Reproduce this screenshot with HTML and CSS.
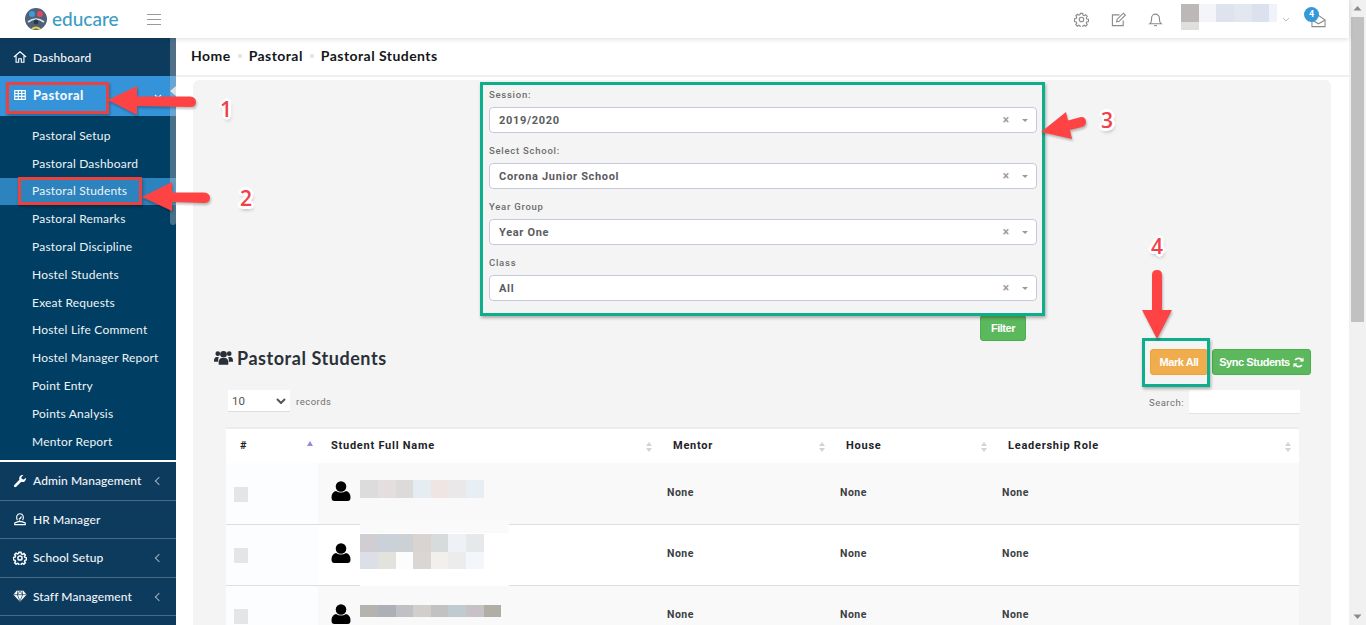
FILE: index.html
```html
<!DOCTYPE html>
<html lang="en">
<head>
<meta charset="utf-8">
<title>Pastoral Students</title>
<link rel="stylesheet" href="styles.css">
</head>
<body>
<div class="page">
  <div class="app">
    <header class="topbar">
      <div class="brand">
        <svg class="logo" viewBox="0 0 22 22"><circle cx="11" cy="11" r="11" fill="#4d6278"/><circle cx="7" cy="6" r="3" fill="#3f9ad6"/><circle cx="15" cy="6" r="3" fill="#e2475f"/><path d="M3 14q8-6 16 0" stroke="#dfe7ee" stroke-width="1.6" fill="none"/><path d="M7 21q4-3 8 0" stroke="#f3d33c" stroke-width="2" fill="none"/><circle cx="11" cy="14" r="2.4" fill="#26384a"/></svg>
        <span class="brand-name">educare</span>
      </div>
      <div class="hamburger"><i></i><i></i><i></i></div>
      <div class="top-actions">
        <svg class="top-icon" viewBox="0 0 16 16"><circle cx="8" cy="8" r="2.4"/><path d="M6.8 1.5h2.4l.4 1.8 1.3.6 1.6-1 1.6 1.7-1 1.5.5 1.3 1.9.4v2.4l-1.9.4-.5 1.3 1 1.5-1.6 1.7-1.6-1-1.3.6-.4 1.8H6.8l-.4-1.8-1.3-.6-1.6 1-1.6-1.7 1-1.5-.5-1.3-1.9-.4V7.3l1.9-.4.5-1.3-1-1.5 1.6-1.7 1.6 1 1.3-.6z"/></svg>
        <svg class="top-icon" viewBox="0 0 16 16"><path d="M13 9v5.5H1.5V3H9"/><path d="M6 10.500l.6-2.800 6.600-6.400 2 2-6.500 6.600z"/></svg>
        <svg class="top-icon" viewBox="0 0 16 16"><path d="M2 12.500q1.800-1.500 1.800-4.500V6.500a4.200 4.200 0 0 1 8.400 0V8q0 3 1.800 4.500z"/><path d="M6.500 14.500h3"/></svg>
        <div class="user-blur"><span class="user-row"></span><span class="user-under"></span></div>
        <svg class="user-caret" viewBox="0 0 8 5"><path d="M1 1l3 3 3-3"/></svg>
        <div class="mail">
          <svg class="mail-icon" viewBox="0 0 16 14"><path d="M1 6l7-5 7 5v7H1z"/><path d="M1 6l7 4 7-4"/></svg>
          <span class="badge">4</span>
        </div>
      </div>
    </header>
    <div class="body">
      <aside class="sidebar">
        <a class="nav-item"><svg class="nav-icon" viewBox="0 0 16 16"><path class="line" d="M1 8l7-6 7 6M3.500 6.500V14h3v-4h3v4h3V6.500"/></svg>Dashboard</a>
        <a class="nav-item nav-active"><svg class="nav-icon" viewBox="0 0 16 16"><path class="line" d="M2 3h12v10H2zM2 6.300h12M2 9.600h12M6 3v10M10 3v10"/></svg>Pastoral<svg class="nav-down" viewBox="0 0 8 5"><path d="M1 1l3 3 3-3"/></svg></a>
        <nav class="submenu">
          <a class="sub-item">Pastoral Setup</a>
          <a class="sub-item">Pastoral Dashboard</a>
          <a class="sub-item sub-active">Pastoral Students</a>
          <a class="sub-item">Pastoral Remarks</a>
          <a class="sub-item">Pastoral Discipline</a>
          <a class="sub-item">Hostel Students</a>
          <a class="sub-item">Exeat Requests</a>
          <a class="sub-item">Hostel Life Comment</a>
          <a class="sub-item">Hostel Manager Report</a>
          <a class="sub-item">Point Entry</a>
          <a class="sub-item">Points Analysis</a>
          <a class="sub-item">Mentor Report</a>
        </nav>
        <a class="nav-item nav-line"><svg class="nav-icon" viewBox="0 0 16 16"><path d="M14.800 4.300a4 4 0 0 1-5.300 4.600L3.700 14.700a1.400 1.400 0 0 1-2.200-2.200l5.800-5.800A4 4 0 0 1 11.900 1.200L9.500 3.600l.6 2.200 2.200.6z"/></svg>Admin Management<span class="nav-left"></span></a>
        <a class="nav-item nav-line"><svg class="nav-icon" viewBox="0 0 16 16"><path class="line" d="M5 9.500C3 6 4.500 2 8 2s5 4 3 7.500M6.500 8q2.500 0 3-3M2 14.500v-2l4-1.500h4l4 1.500v2zM7 9.500l1.500 1.500"/></svg>HR Manager</a>
        <a class="nav-item nav-line"><svg class="nav-icon" viewBox="0 0 16 16"><circle class="line wide" cx="8" cy="8" r="2.400"/><path class="line wide" d="M6.800 1.500h2.400l.4 1.800 1.300.6 1.600-1 1.600 1.700-1 1.500.5 1.300 1.900.4v2.400l-1.900.4-.5 1.300 1 1.500-1.600 1.700-1.600-1-1.300.6-.4 1.800H6.800l-.4-1.800-1.300-.6-1.600 1-1.600-1.700 1-1.500-.5-1.300-1.900-.4V7.300l1.900-.4.500-1.300-1-1.500 1.600-1.700 1.600 1 1.300-.6z"/></svg>School Setup<span class="nav-left"></span></a>
        <a class="nav-item nav-line"><svg class="nav-icon" viewBox="0 0 16 16"><path d="M4 2h8l3.500 4.500L8 14.500.5 6.500z"/><path class="cut" d="M1 6.500h14M5 6.500L8 14l3-7.500M5.500 2.500l-.5 4 3-4 3 4-.5-4"/></svg>Staff Management<span class="nav-left"></span></a>
        <div class="side-thumb"></div>
      </aside>
      <main class="main">
        <div class="crumbs">
          <span>Home</span><i class="crumb-dot"></i><span>Pastoral</span><i class="crumb-dot"></i><span>Pastoral Students</span>
        </div>
        <section class="panel">
          <form class="filter-form">
            <div class="field">
              <label class="field-label">Session:</label>
              <div class="select2"><span class="select-value">2019/2020</span><span class="select-x">×</span><i class="select-caret"></i></div>
            </div>
            <div class="field">
              <label class="field-label">Select School:</label>
              <div class="select2"><span class="select-value">Corona Junior School</span><span class="select-x">×</span><i class="select-caret"></i></div>
            </div>
            <div class="field">
              <label class="field-label">Year Group</label>
              <div class="select2"><span class="select-value">Year One</span><span class="select-x">×</span><i class="select-caret"></i></div>
            </div>
            <div class="field">
              <label class="field-label">Class</label>
              <div class="select2"><span class="select-value">All</span><span class="select-x">×</span><i class="select-caret"></i></div>
            </div>
            <div class="filter-row"><button type="button" class="btn btn-green btn-filter">Filter</button></div>
          </form>
          <div class="title-row">
            <h2 class="title">
              <svg class="title-icon" viewBox="0 0 20 16"><circle cx="4" cy="3.500" r="2.500"/><circle cx="16" cy="3.500" r="2.500"/><circle cx="10" cy="4" r="3.500"/><path d="M0 11q0-4 3-4h2q-1 2-.5 5H0zM20 11q0-4-3-4h-2q1 2 .5 5H20zM5 15q-.5-7 3-7h4q3.500 0 3 7z"/></svg>
              Pastoral Students
            </h2>
            <div class="title-actions">
              <button type="button" class="btn btn-orange">Mark All</button>
              <button type="button" class="btn btn-green btn-sync">Sync Students
                <svg class="sync-icon" viewBox="0 0 12 12"><path d="M10.500 4.500A4.800 4.800 0 0 0 2.300 3.300M1.500 7.500a4.800 4.800 0 0 0 8.200 1.200"/><path class="fill" d="M11.500 0.500v4.500H7zM0.500 11.500V7H5z"/></svg>
              </button>
            </div>
          </div>
          <div class="table-tools">
            <div class="records">
              <div class="records-select"><span>10</span><svg viewBox="0 0 10 6"><path d="M1 1l4 4 4-4"/></svg></div>
              <span class="tool-label">records</span>
            </div>
            <div class="search">
              <span class="tool-label">Search:</span>
              <div class="search-input"></div>
            </div>
          </div>
          <table class="students">
            <colgroup><col class="c1"><col class="c2"><col class="c3"><col class="c4"><col class="c5"></colgroup>
            <thead>
              <tr>
                <th class="th-id">#<span class="sort sort-up"></span></th>
                <th>Student Full Name<span class="sort"></span></th>
                <th>Mentor<span class="sort"></span></th>
                <th>House<span class="sort"></span></th>
                <th>Leadership Role<span class="sort"></span></th>
              </tr>
            </thead>
            <tbody>
              <tr class="odd">
                <td class="td-check"><span class="check"></span></td>
                <td class="td-name"><div class="name-wrap"><svg class="person" viewBox="0 0 20 20"><circle cx="10" cy="5.500" r="5.300"/><path d="M0.500 16.500q0-5.500 4.500-6.500q5 3 10 0q4.500 1 4.500 6.500q0 3.500-3 3.500H3.500q-3 0-3-3.500z"/></svg><div class="blur-stack"><span class="blur blur-r1"></span></div></div></td>
                <td class="td-val">None</td><td class="td-val">None</td><td class="td-val">None</td>
              </tr>
              <tr>
                <td class="td-check"><span class="check"></span></td>
                <td class="td-name"><div class="name-cover"></div><div class="name-wrap"><svg class="person" viewBox="0 0 20 20"><circle cx="10" cy="5.500" r="5.300"/><path d="M0.500 16.500q0-5.500 4.500-6.500q5 3 10 0q4.500 1 4.500 6.500q0 3.500-3 3.500H3.500q-3 0-3-3.500z"/></svg><div class="blur-stack"><span class="blur blur-r2a"></span><span class="blur blur-r2b"></span></div></div></td>
                <td class="td-val">None</td><td class="td-val">None</td><td class="td-val">None</td>
              </tr>
              <tr class="odd">
                <td class="td-check"><span class="check"></span></td>
                <td class="td-name"><div class="name-wrap"><svg class="person" viewBox="0 0 20 20"><circle cx="10" cy="5.500" r="5.300"/><path d="M0.500 16.500q0-5.500 4.500-6.500q5 3 10 0q4.500 1 4.500 6.500q0 3.500-3 3.500H3.500q-3 0-3-3.500z"/></svg><div class="blur-stack"><span class="blur blur-r3"></span></div></div></td>
                <td class="td-val">None</td><td class="td-val">None</td><td class="td-val">None</td>
              </tr>
            </tbody>
          </table>
        </section>
      </main>
    </div>
  </div>
  <div class="scrollbar">
    <svg class="scroll-arrow" viewBox="0 0 17 17"><path d="M4.500 10.500h8L8.500 6z"/></svg>
    <div class="scroll-track"><div class="scroll-thumb"></div></div>
    <svg class="scroll-arrow" viewBox="0 0 17 17"><path d="M4.500 6.500h8L8.500 11z"/></svg>
  </div>
  <div class="note-box red box-1"></div>
  <div class="note-box red box-2"></div>
  <div class="note-box teal box-3"></div>
  <div class="note-box teal box-4"></div>
  <svg class="arrows" viewBox="0 0 1366 625">
    <path d="M108 100L137 86V96.500L190 96.500Q196 97 196 102Q196 107 190 107L137 106V115Z"/>
    <path d="M142 197L172 182V192.500L204 192.500Q210 193 210 198Q210 203 204 203L172 202V211Z"/>
    <path d="M1041 132L1066 112L1068 120.500L1081 117Q1086 117 1086 122Q1086 126 1082 127L1070 130L1072 139Z"/>
    <path d="M1152 275Q1152 270 1157 270Q1162 270 1162 275V310H1172L1157 339L1142 310H1152Z"/>
  </svg>
  <span class="note-num num-1">1</span>
  <span class="note-num num-2">2</span>
  <span class="note-num num-3">3</span>
  <span class="note-num num-4">4</span>
</div>
</body>
</html>
```

FILE: styles.css
```css
* { box-sizing: border-box; }
html, body { margin: 0; height: 625px; overflow: hidden; }
body { font-family: "Lato", "Liberation Sans", sans-serif; background: #fff; color: #222; }

.page { position: relative; display: flex; width: 1366px; height: 625px; overflow: hidden; }
.app { display: flex; flex-direction: column; width: 1349px; height: 625px; }

/* top bar */
.topbar { position: relative; z-index: 2; display: flex; align-items: center; flex: 0 0 38px; background: #fff; box-shadow: 0 1px 5px rgba(0,0,0,.14); }
.brand { display: flex; align-items: center; gap: 5px; width: 147px; padding-left: 25px; }
.logo { width: 22px; height: 22px; }
.brand-name { font: 500 19px/22px "Lato", sans-serif; color: #3b9cc4; letter-spacing: 0; }
.hamburger { display: flex; flex-direction: column; gap: 4px; width: 14px; }
.hamburger i { display: block; height: 1px; background: #9a9a9a; }
.top-actions { display: flex; align-items: center; margin-left: auto; }
.top-icon { width: 15px; height: 15px; margin-right: 22px; fill: none; stroke: #8a8a8a; stroke-width: 1.200; }
.user-blur { display: flex; flex-direction: column; width: 96px; height: 38px; padding-top: 4px; margin-left: -4px; }
.user-row { display: block; height: 18px; background: linear-gradient(90deg, #bcb8b8 18px, #f4f5f9 18px 35px, #dfe3ee 35px 53px, #e3e7f0 53px 71px, #dbe1ed 71px 88px, #f0f3f9 88px); }
.user-under { display: block; width: 18px; height: 8px; background: #e0dfdd; }
.user-caret { width: 8px; height: 5px; margin: 0 0 0 5px; fill: none; stroke: #bbb; stroke-width: 1; }
.mail { position: relative; width: 17px; height: 16px; margin: 0 22px 0 20px; }
.mail-icon { display: block; width: 15px; height: 14px; margin-top: 3px; margin-left: 1px; fill: #fff; stroke: #8a8a8a; stroke-width: 1.100; }
.badge { position: absolute; left: -6px; top: -4px; width: 15px; height: 15px; border-radius: 50%; background: #3498db; color: #fff; font: 700 9px/15px "Roboto", sans-serif; text-align: center; }

.body { display: flex; flex: 1; min-height: 0; }

/* sidebar */
.sidebar { position: relative; flex: 0 0 176px; background: #0d3b5e; color: #fff; overflow: hidden; }
.nav-item { position: relative; display: flex; align-items: center; height: 38px; padding-left: 13px; font-size: 12px; font-weight: 500; letter-spacing: .1px; color: #f1f5f8; }
.nav-icon { flex: 0 0 14px; width: 14px; height: 14px; margin-right: 6px; fill: #fff; }
.nav-icon .line { fill: none; stroke: #fff; stroke-width: 1.300; }
.nav-icon .wide { stroke-width: 1.700; }
.nav-icon .cut { fill: none; stroke: #0d3b5e; stroke-width: .8; }
.nav-active { height: 40px; padding-bottom: 2px; background: #3594d9; font-size: 13px; font-weight: 900; letter-spacing: .4px; }
.nav-active::after { content: ""; position: absolute; right: 0; top: 10px; border: 5px solid transparent; border-right: 6px solid #eef3f7; border-left: 0; }
.nav-down { position: absolute; right: 14px; top: 18px; width: 8px; height: 5px; fill: none; stroke: #eef4f9; stroke-width: 1.200; }
.nav-left { position: absolute; left: 156px; top: 16px; width: 6px; height: 6px; border-left: 1px solid #9fb1c0; border-bottom: 1px solid #9fb1c0; transform: rotate(45deg); }
.nav-line { border-bottom: 1px solid #476a85; height: 38.500px; }
.submenu { display: flex; flex-direction: column; height: 346px; padding-top: 6px; background: #003f63; border-bottom: 2px solid #fff; }
.sub-item { display: flex; align-items: center; height: 27.800px; padding-left: 32px; padding-bottom: 1px; font-size: 12px; letter-spacing: .2px; color: #eef3f6; }
.sub-active { background: #2c83bd; }
.side-thumb { position: absolute; right: 0; top: 0; width: 6px; height: 187px; background: rgba(190,195,200,.38); border-radius: 0 0 3px 3px; }

/* main */
.main { flex: 1; min-width: 0; overflow: hidden; background: #fff; }
.crumbs { display: flex; align-items: center; gap: 5px; height: 39px; padding: 0 0 2px 15px; border-bottom: 2px solid #eef0f3; font-size: 14px; font-weight: 700; color: #14171b; letter-spacing: .45px; }
.crumb-dot { width: 4px; height: 4px; margin: 0 2px; border-radius: 50%; background: #dfe3e6; }
.panel { margin: 3px 18px 0 17px; padding: 8px 20px 0 21px; background: #f4f4f4; border-radius: 6px 6px 0 0; height: 600px; }

/* filter form */
.filter-form { width: 548px; margin-left: 275px; font-family: "Roboto", "Liberation Sans", sans-serif; }
.field { height: 56px; }
.field-label { display: block; height: 19px; padding-top: 1px; font-size: 9.500px; line-height: 12px; font-weight: 500; letter-spacing: .75px; color: #6d6d6d; }
.select2 { display: flex; align-items: center; height: 26px; padding: 0 8px 0 9px; background: #fff; border: 1px solid #c5cbdc; border-radius: 4px; }
.select-value { flex: 1; font-size: 11px; font-weight: 700; letter-spacing: .68px; color: #5b5b60; }
.select-x { margin-right: 13px; font-size: 12px; font-weight: 700; color: #9b9b9b; line-height: 12px; }
.select-caret { width: 0; height: 0; border: 3.500px solid transparent; border-top: 3.500px solid #9a9a9a; border-bottom: 0; }
.filter-row { display: flex; justify-content: flex-end; padding: 3px 11px 0 0; }

.btn { height: 26px; border-radius: 3px; font-family: "Liberation Sans", Arial, sans-serif; font-size: 11px; font-weight: 700; letter-spacing: -.45px; color: #fff; cursor: pointer; }
.btn-green { background: #5cb85c; border: 1px solid #4cae4c; }
.btn-orange { width: 58px; padding: 0; background: #f0ad4e; border: 1px solid #eea236; }
.btn-filter { width: 46px; padding: 0; }
.btn-sync { display: flex; align-items: center; justify-content: center; gap: 3px; width: 99px; padding: 0; }
.sync-icon { width: 11px; height: 11px; fill: none; stroke: #fff; stroke-width: 2; }
.sync-icon .fill { fill: #fff; stroke: none; }

/* heading */
.title-row { display: flex; justify-content: space-between; align-items: flex-start; height: 26px; margin-top: 8px; }
.title { display: flex; align-items: center; gap: 4px; margin: -1px 0 0; height: 19px; font-size: 18px; font-weight: 700; letter-spacing: .55px; color: #2b3038; }
.title-icon { width: 19px; height: 16px; fill: #2b3038; }
.title-actions { display: flex; gap: 4px; }

/* tools */
.table-tools { display: flex; justify-content: space-between; align-items: flex-start; height: 37px; margin-top: 15px; padding: 0 11px 0 14px; font-family: "Roboto", sans-serif; }
.records { display: flex; align-items: center; gap: 6px; }
.records-select { display: flex; align-items: center; justify-content: space-between; width: 62px; height: 22px; padding: 0 4px 0 4px; background: #fff; border-bottom: 1px solid #ddd; font-size: 11.500px; color: #555; }
.records-select svg { width: 10px; height: 6px; fill: none; stroke: #555; stroke-width: 2; }
.tool-label { font-size: 9.500px; letter-spacing: .5px; color: #6f6f6f; }
.search { display: flex; align-items: center; gap: 5px; }
.search-input { width: 111px; height: 24px; background: #fff; border-bottom: 1px solid #e3e3e3; }

/* table */
.students { width: 1073px; margin-left: 12px; table-layout: fixed; border-collapse: collapse; border-top: 2px solid #ececec; font-family: "Roboto", sans-serif; }
.c1 { width: 92px; } .c2 { width: 342px; } .c3 { width: 173px; } .c4 { width: 162px; } .c5 { width: 304px; }
.students th { position: relative; height: 35px; padding: 0 0 2px 13px; background: #fff; text-align: left; font-size: 11px; font-weight: 700; letter-spacing: .75px; color: #1f2328; }
.students .th-id { padding-left: 14px; }
.sort { position: absolute; right: 8px; top: 13px; width: 0; height: 0; border: 3px solid transparent; border-bottom: 4px solid #d3d3d3; border-top: 0; }
.sort::after { content: ""; position: absolute; left: -3px; top: 6px; border: 3px solid transparent; border-top: 4px solid #d3d3d3; border-bottom: 0; }
.sort-up { top: 12px; right: 5px; border-width: 0 3px 5px; border-bottom-color: #8c8ce0; }
.sort-up::after { display: none; }
.students td { height: 61px; padding: 0; border-bottom: 1px solid #dedede; background: #fff; }
.students .odd td { background: #f9f9f9; }
.students .td-check { background: #fcfdff; padding-left: 8px; }
.students .odd .td-check { background: #fcfdff; }
.check { display: block; width: 14px; height: 15px; margin-top: 2px; background: #e5e5e5; }
.td-name { position: relative; }
.name-wrap { position: relative; display: flex; align-items: flex-start; height: 60px; padding: 18px 0 0 13px; }
.person { flex: 0 0 20px; width: 20px; height: 20px; fill: #000; }
.blur-stack { margin-left: 9px; }
.blur { display: block; width: 124px; height: 18px; }
.blur-r1 { margin-top: -1px; background: linear-gradient(90deg, #dcdcdc 18px, #e4dede 18px 36px, #dcdbd9 36px 53px, #e5ecf2 53px 71px, #efe5e3 71px 88px, #eae8e9 88px 106px, #e7eff4 106px); }
.blur-r2a { margin-top: -9px; background: linear-gradient(90deg, #d0ced3 18px, #cbd1d8 18px 36px, #cbd1d5 36px 53px, #d9d4d2 53px 71px, #d6dbdb 71px 88px, #eef2f6 88px 106px, #e7e8ea 106px); }
.blur-r2b { height: 17px; background: linear-gradient(90deg, #dcdfe8 18px, #e2e3dd 18px 36px, #fafdfb 36px 53px, #dad6d3 53px 71px, #f1f0ec 71px 88px, #ececec 88px 106px, #f3f7fb 106px); }
.blur-r3 { width: 141px; height: 12px; margin-top: 1px; background: linear-gradient(90deg, #b5b3b0 18px, #adb0b6 18px 36px, #c1c0c5 36px 53px, #d0cfcc 53px 71px, #c2c2c2 71px 88px, #c0cbd0 88px 106px, #c6c2c6 106px 124px, #b1aea6 124px); }
.name-cover { position: absolute; left: 42px; top: -4px; width: 149px; height: 66px; background: linear-gradient(#fafafa 12px, #fff 12px); }
.students .td-val { padding: 0 0 2px 7px; font-size: 10.500px; font-weight: 700; letter-spacing: .5px; color: #3b3f44; }

/* scrollbar */
.scrollbar { display: flex; flex-direction: column; flex: 0 0 17px; background: #f1f1f1; }
.scroll-arrow { flex: 0 0 17px; width: 17px; height: 17px; fill: #8b8b8b; }
.scroll-track { flex: 1; padding: 0 2px; }
.scroll-thumb { height: 305px; background: #c1c1c1; }

/* annotations laid over the screenshot */
.note-box { position: absolute; border-style: solid; pointer-events: none; box-shadow: 1px 2px 3px rgba(0,0,0,.3); }
.red { border-width: 3px; border-color: #ea4240; }
.teal { border-width: 3px; border-color: #0cae8c; }
.box-1 { left: 6px; top: 82px; width: 103px; height: 32px; }
.box-2 { left: 18px; top: 177px; width: 124px; height: 28px; }
.box-3 { left: 480px; top: 82px; width: 565px; height: 234px; }
.box-4 { left: 1142px; top: 338px; width: 68px; height: 49px; }
.arrows { position: absolute; left: 0; top: 0; width: 1366px; height: 625px; fill: #fd4343; filter: drop-shadow(1px 2px 1px rgba(0,0,0,.25)); pointer-events: none; }
.note-num { position: absolute; width: 20px; font: 600 21px/24px "Open Sans", sans-serif; color: #f0404a; text-align: center; text-shadow: -3px 0 0 #fff, 3px 0 0 #fff, 0 -3px 0 #fff, 0 3px 0 #fff, -2px -2px 0 #fff, 2px 2px 0 #fff, 2px -2px 0 #fff, -2px 2px 0 #fff, 1px 3px 4px rgba(0,0,0,.45); }
.num-1 { left: 216px; top: 97px; }
.num-2 { left: 236px; top: 186px; }
.num-3 { left: 1097px; top: 108px; }
.num-4 { left: 1147px; top: 234px; }
```
